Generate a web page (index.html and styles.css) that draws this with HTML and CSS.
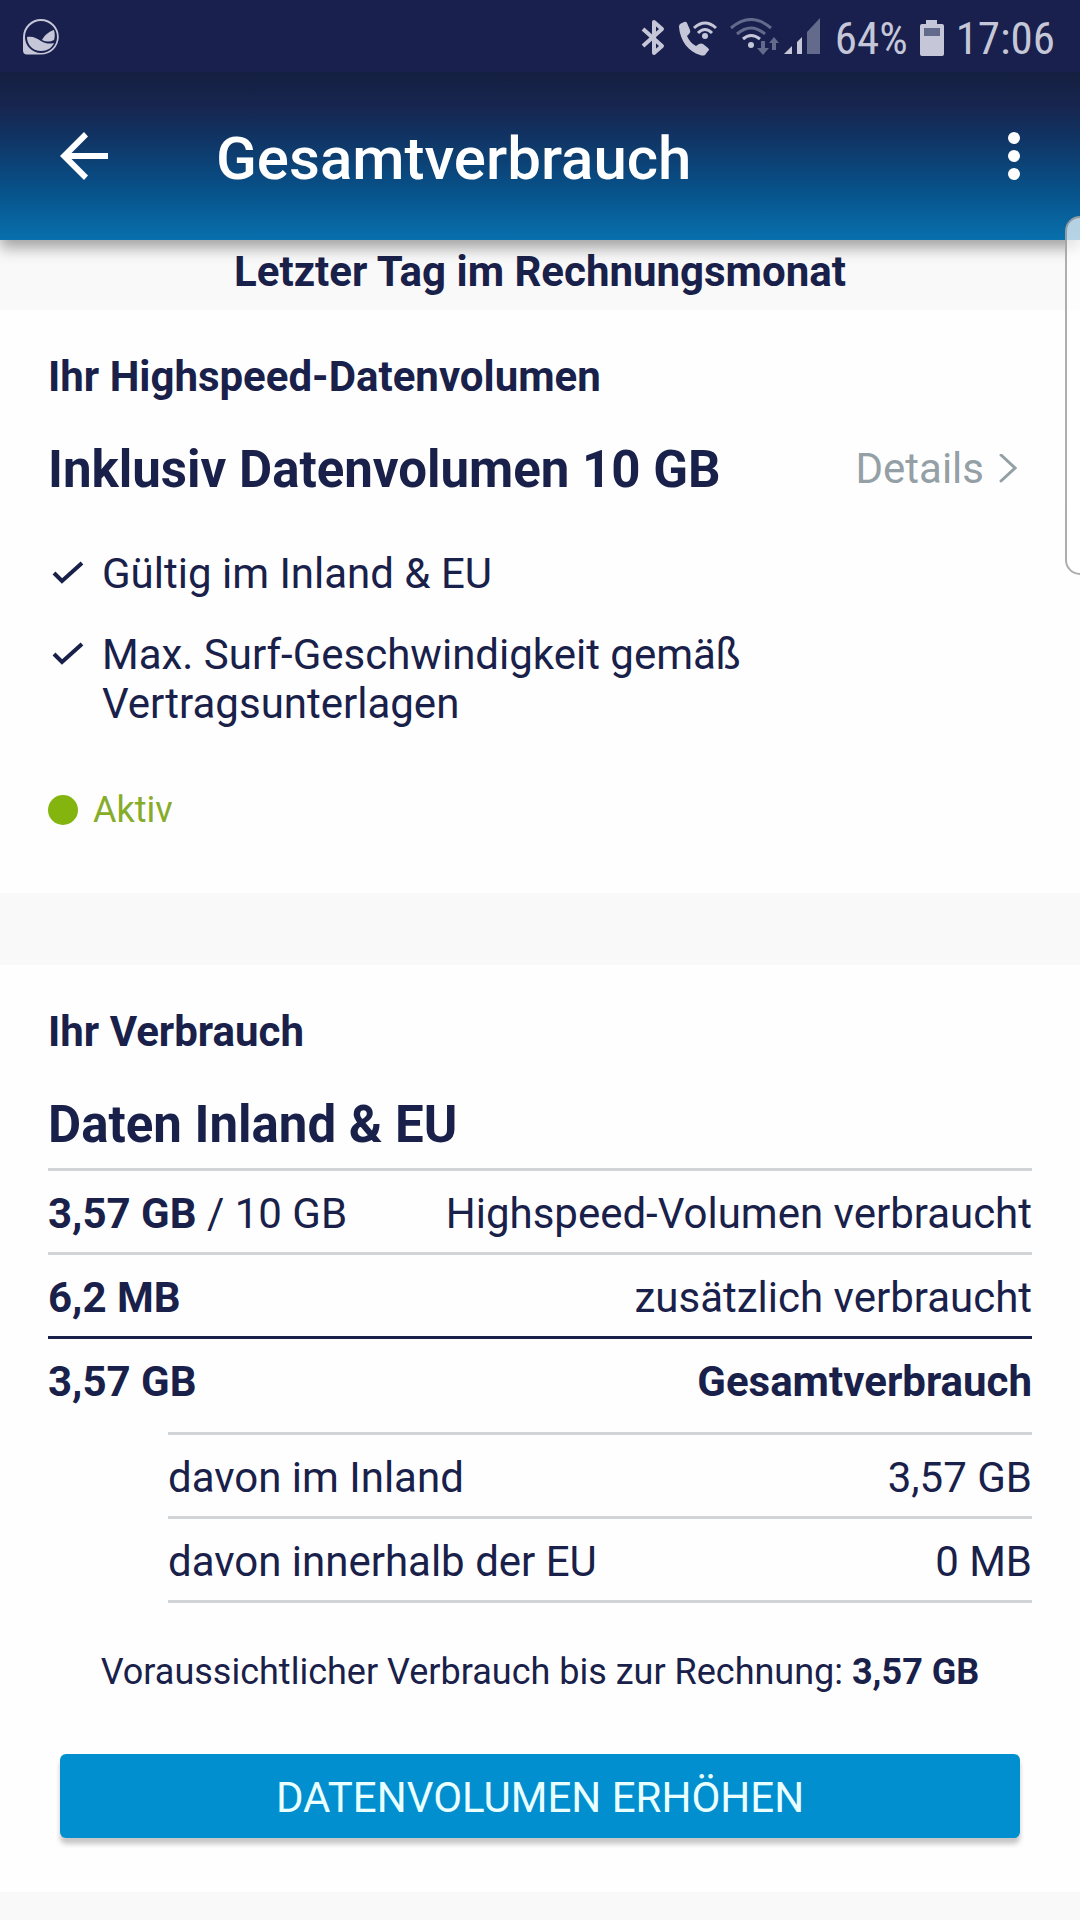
FILE: index.html
```html
<!DOCTYPE html>
<html lang="de">
<head>
<meta charset="utf-8">
<meta name="viewport" content="width=device-width, initial-scale=1">
<title>Gesamtverbrauch</title>
<link rel="stylesheet" href="styles.css">
</head>
<body>
<div class="status-bar">
  <svg class="status-logo" width="38" height="38" viewBox="0 0 38 38" aria-hidden="true">
    <path class="lit" fill-rule="evenodd" d="M19 0a17.800 17.800 0 1 1 0 35.600H5Q1 35.600 1 31.600V18A18 18 0 0 1 19 0zM19 2a16 16 0 1 0 0 32 16 16 0 0 0 0-32z"/>
    <path class="lit" d="M5 18c6-1 9 1 14 4 5 3 9 3 13 2-2 5-7 8-13 8C11 32 5 26 5 18z"/>
    <path class="lit" d="M20 21c2-4 6-8 12-10 1 4 1 7 0 10-4 2-8 2-12 0z"/>
  </svg>
  <div class="status-icons">
    <svg width="26" height="40" viewBox="0 0 26 40" aria-hidden="true">
      <path class="lit-line" stroke-width="4" stroke-linejoin="round" d="M3 11 22 28 14 35V4L22 11 3 28"/>
    </svg>
    <svg class="call-icon" width="40" height="40" viewBox="0 0 40 40" aria-hidden="true">
      <path class="lit" d="M2 6 6 4q2-1 3 1l3 7q1 2-1 4l-2 2q3 7 9 10l3-2q2-1 4 0l5 4q2 2 0 3l-3 4q-2 1-5 0C11 34 2 23 1 9q0-2 1-3z"/>
      <path class="lit-line" stroke-width="3" d="M16 10q11-10 22 0M20 15q7-7 14 0"/>
      <circle class="lit" cx="27" cy="18" r="3"/>
    </svg>
    <svg class="wifi-icon" width="50" height="40" viewBox="0 0 50 40" aria-hidden="true">
      <path class="dim-line" stroke-width="3" d="M1 10q20-17 40 0M7 16q14-12 28 0"/>
      <path class="lit-line" stroke-width="3" d="M13 21q8-7 17 0"/>
      <circle class="lit" cx="21" cy="27" r="3"/>
      <path class="dim" d="M31 23h4v7h4l-6 7-6-7h4zM42 32h4v-7h3l-5-6-5 6h3z"/>
    </svg>
    <svg class="signal-icon" width="38" height="40" viewBox="0 0 38 40" aria-hidden="true">
      <path class="lit" d="M0 36 8 28v8zM13 24l5-5v17h-5z"/>
      <path class="dim" d="M23 14 36 0v36H23z"/>
    </svg>
    <span class="status-text battery-text">64%</span>
    <svg class="battery-icon" width="24" height="38" viewBox="0 0 24 38" aria-hidden="true">
      <path class="lit" d="M6 1h11v4h5q2 0 2 2v28q0 2-2 2H2q-2 0-2-2V7q0-2 2-2h4z"/>
      <path class="dim" d="M4 9h16v8H4z"/>
    </svg>
    <span class="status-text">17:06</span>
  </div>
</div>

<header class="app-bar">
  <button class="icon-button" type="button" aria-label="Zurück">
    <svg width="48" height="48" viewBox="0 0 48 48" aria-hidden="true"><path d="M48 21H11.500L28 4.500 24 0 0 24l24 24 4-4.500L11.500 27H48z"/></svg>
  </button>
  <h1 class="app-title">Gesamtverbrauch</h1>
  <button class="icon-button" type="button" aria-label="Weitere Optionen">
    <svg width="12" height="48" viewBox="0 0 12 48" aria-hidden="true"><circle cx="6" cy="6" r="6"/><circle cx="6" cy="24" r="6"/><circle cx="6" cy="42" r="6"/></svg>
  </button>
</header>
<div class="edge-handle"></div>

<main>
  <p class="notice">Letzter Tag im Rechnungsmonat</p>

  <section class="card plan">
    <h2 class="eyebrow">Ihr Highspeed-Datenvolumen</h2>
    <div class="plan-head">
      <h3 class="heading">Inklusiv Datenvolumen 10 GB</h3>
      <a class="details" href="#details">Details
        <svg width="18" height="30" viewBox="0 0 18 30" aria-hidden="true"><path d="M2 1 16 14 2 27"/></svg>
      </a>
    </div>
    <ul class="features">
      <li><svg class="check" width="32" height="24" viewBox="0 0 32 24" aria-hidden="true"><path d="M2 12 10 20 30 2"/></svg>Gültig im Inland &amp; EU</li>
      <li><svg class="check" width="32" height="24" viewBox="0 0 32 24" aria-hidden="true"><path d="M2 12 10 20 30 2"/></svg>Max. Surf-Geschwindigkeit gemäß Vertragsunterlagen</li>
    </ul>
    <p class="state">Aktiv</p>
  </section>

  <section class="card usage">
    <h2 class="eyebrow">Ihr Verbrauch</h2>
    <h3 class="heading">Daten Inland &amp; EU</h3>
    <table class="usage-table">
      <tbody>
        <tr><td><strong>3,57 GB</strong> / 10 GB</td><td>Highspeed-Volumen verbraucht</td></tr>
        <tr><td><strong>6,2 MB</strong></td><td>zusätzlich verbraucht</td></tr>
        <tr class="total"><td>3,57 GB</td><td>Gesamtverbrauch</td></tr>
      </tbody>
    </table>
    <table class="usage-table breakdown">
      <tbody>
        <tr><td>davon im Inland</td><td>3,57 GB</td></tr>
        <tr><td>davon innerhalb der EU</td><td>0 MB</td></tr>
      </tbody>
    </table>
    <p class="forecast">Voraussichtlicher Verbrauch bis zur Rechnung: <strong>3,57 GB</strong></p>
    <button class="primary" type="button">DATENVOLUMEN ERHÖHEN</button>
  </section>
</main>
</body>
</html>
```
FILE: styles.css
```css
* {
  box-sizing: border-box;
}

body {
  position: relative;
  margin: 0;
  min-height: 100vh;
  overflow-x: hidden;
  background: #f9f9f9;
  color: #19214a;
  font: 400 42px/49px Roboto, sans-serif;
}

h1, h2, h3, p, ul {
  margin: 0;
  padding: 0;
}

button {
  border: 0;
  font: inherit;
}

svg {
  flex: none;
}

strong {
  font-weight: 700;
}

/* System status bar */
.status-bar {
  display: flex;
  justify-content: space-between;
  align-items: center;
  height: 72px;
  padding: 4px 25px 0 22px;
  background: #19204d;
  color: #c5c7d8;
}

.status-icons {
  display: flex;
  align-items: center;
}

.status-text {
  font-family: "Roboto Condensed", "Liberation Sans Narrow", Roboto, sans-serif;
  font-size: 45px;
  white-space: nowrap;
}

.call-icon { margin-left: 12px; }
.wifi-icon { margin-left: 12px; }
.signal-icon { margin-left: 4px; }
.battery-text { margin-left: 13px; }
.battery-icon { margin: 0 12px; }

.lit { fill: #c5c7d8; }
.dim { fill: #646a8b; }
.lit-line { fill: none; stroke: #c5c7d8; }
.dim-line { fill: none; stroke: #646a8b; }

/* App bar */
.app-bar {
  display: flex;
  align-items: center;
  height: 168px;
  padding: 0 48px;
  background: linear-gradient(#141f40, #17254f 20%, #103565 40%, #075189 70%, #0870ad);
  box-shadow: 0 8px 14px rgba(0, 0, 0, 0.35);
  clip-path: inset(0 0 -30px 0);
}

.icon-button {
  display: flex;
  justify-content: center;
  min-width: 12px;
  padding: 0 12px;
  background: none;
  fill: #fff;
}

.app-title {
  flex: 1;
  margin-left: 96px;
  padding-top: 5px;
  color: #fff;
  font-size: 60px;
  font-weight: 500;
  line-height: 70px;
}

.edge-handle {
  position: absolute;
  top: 216px;
  right: 0;
  width: 15px;
  height: 359px;
  border: 2px solid rgba(130, 130, 130, 0.65);
  border-right: 0;
  border-radius: 18px 0 0 18px;
  background: rgba(255, 255, 255, 0.7);
}

/* Content */
.notice {
  padding: 7px 48px 14px;
  font-weight: 700;
  text-align: center;
}

.card {
  padding: 42px 48px 54px;
  background: #fefefe;
}

.plan {
  margin-bottom: 72px;
  padding-bottom: 62px;
}

.eyebrow {
  margin-bottom: 39px;
  font-size: 42px;
  font-weight: 700;
}

.heading {
  font-size: 51px;
  font-weight: 700;
  line-height: 60px;
}

.plan-head {
  display: flex;
  justify-content: space-between;
  align-items: center;
}

.details {
  display: flex;
  align-items: center;
  gap: 15px;
  margin-right: 15px;
  padding-bottom: 3px;
  color: #949fa6;
  text-decoration: none;
}

.details path {
  fill: none;
  stroke: #949fa6;
  stroke-width: 3;
  stroke-linecap: round;
}

.features {
  display: grid;
  gap: 32px;
  margin-top: 49px;
  list-style: none;
}

.features li {
  display: flex;
  gap: 18px;
  max-width: 720px;
  padding-left: 4px;
}

.check {
  margin-top: 12px;
  fill: none;
  stroke: #19214a;
  stroke-width: 4;
}

.state {
  display: flex;
  align-items: center;
  gap: 15px;
  margin-top: 61px;
  color: #86ac2a;
  font-size: 36px;
  line-height: 42px;
}

.state::before {
  width: 30px;
  height: 30px;
  border-radius: 50%;
  background: #84b50e;
  content: "";
}

.usage-table {
  width: 100%;
  margin-top: 13px;
  border-collapse: separate;
  border-spacing: 0;
}

.usage-table td {
  padding: 18px 0 14px;
  border-top: 3px solid #d0d4d7;
}

.usage-table td:last-child {
  text-align: right;
}

.usage-table .total td {
  border-top-color: #19214a;
  font-weight: 700;
}

.breakdown {
  width: calc(100% - 120px);
  margin: 12px 0 0 120px;
  border-bottom: 3px solid #d0d4d7;
}

.forecast {
  margin-top: 48px;
  font-size: 36px;
  line-height: 42px;
  text-align: center;
}

.primary {
  display: block;
  width: calc(100% - 24px);
  margin: 61px 12px 0;
  padding: 19px 0 16px;
  border-radius: 6px;
  background: #018fd0;
  box-shadow: 0 6px 5px rgba(0, 0, 0, 0.22);
  color: #eaffff;
}
```
